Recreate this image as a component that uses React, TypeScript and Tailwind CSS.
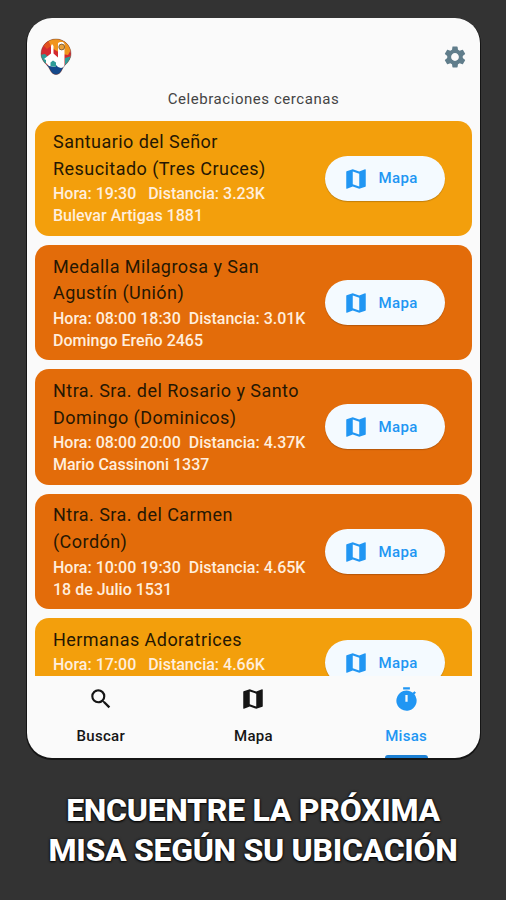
import { MdMap, MdSearch, MdSettings } from 'react-icons/md';

interface Mass {
  name: string[];
  hours: string;
  distance: string;
  address?: string;
  color: string;
}

const masses: Mass[] = [
  { name: ['Santuario del Señor', 'Resucitado (Tres Cruces)'], hours: '19:30 ', distance: '3.23K', address: 'Bulevar Artigas 1881', color: 'bg-[#f39f0c]' },
  { name: ['Medalla Milagrosa y San', 'Agustín (Unión)'], hours: '08:00 18:30', distance: '3.01K', address: 'Domingo Ereño 2465', color: 'bg-[#e36c0a]' },
  { name: ['Ntra. Sra. del Rosario y Santo', 'Domingo (Dominicos)'], hours: '08:00 20:00', distance: '4.37K', address: 'Mario Cassinoni 1337', color: 'bg-[#e36c0a]' },
  { name: ['Ntra. Sra. del Carmen', '(Cordón)'], hours: '10:00 19:30', distance: '4.65K', address: '18 de Julio 1531', color: 'bg-[#e36c0a]' },
  { name: ['Hermanas Adoratrices'], hours: '17:00 ', distance: '4.66K', color: 'bg-[#f39f0c]' },
];

const pin = 'M16 1C7.700 1 1 7.700 1 15.800c0 5 3.300 9 6.500 12 1.700 1.700 2 3.400 3.500 5.700 1.200 1.800 2.900 3 5 3s3.800-1.200 5-3c1.500-2.300 1.800-4 3.500-5.700 3.200-3 6.500-7 6.500-12C31 7.700 24.300 1 16 1z';

function Logo() {
  return (
    <svg viewBox="0 0 32 37" className="h-[37px] w-8">
      <defs>
        <clipPath id="pin">
          <path d={pin} />
        </clipPath>
      </defs>
      <g clipPath="url(#pin)">
        <path fill="#d42a30" d="M0 0h32v37H0z" />
        <path fill="#f0951d" d="M8 0h18l6 10-4 7-6-1-7-4-6-5z" />
        <path fill="#e2501f" d="M3 7l5-5 3 6-4 3z" />
        <path fill="#2e9c98" d="M0 17l5-1 4 4-3 6-6-4zM25 20l7-2v6l-7 5z" />
        <path fill="#14498b" d="M6 27l12-1 9 1v10H6z" />
      </g>
      <path fill="#fff" d="M4 21l7-5.500V8l1-2 1.500 2v7.500l4.500 4V5l2-1h3l1.500 2v23l-3.500 1-3-1-2-2v2l-7-1-3-3v-3z" />
      <circle cx="21.700" cy="9" r="2.900" fill="#e8a13c" stroke="#775b3b" strokeWidth=".9" />
      <path fill="#2e9c98" d="M10.500 24.500l2.500-2 3 2V29l-5.500-1z" />
      <path fill="none" stroke="#5c4638" strokeWidth=".4" d={pin} />
    </svg>
  );
}

function TimerIcon() {
  return (
    <svg viewBox="0 0 24 24" fill="currentColor" className="size-[27px]">
      <path fillRule="evenodd" d="M9 1h6v2H9zM19.030 7.390l1.420-1.420c-.43-.51-.9-.99-1.410-1.410l-1.420 1.420A9 9 0 1 0 19.030 7.390zM13 14h-2V8h2z" />
    </svg>
  );
}

function MassCard({ mass }: { mass: Mass }) {
  return (
    <div className={`flex shrink-0 justify-between rounded-[14px] pl-[18.500px] pr-[26.500px] ${mass.color} ${mass.address ? 'h-[115.400px]' : 'h-[89px]'}`}>
      <div className="whitespace-pre pt-[8.700px]">
        <h2 className="text-[18px] leading-[26.700px] tracking-[0.450px] text-[#251703]">
          {mass.name.map((line) => (
            <div key={line}>{line}</div>
          ))}
        </h2>
        <div className="pt-[0.800px] text-[16px] font-medium leading-[22px] text-[#ffeedd]">
          <p>Hora: {mass.hours}  Distancia: {mass.distance}</p>
          {mass.address && <p>{mass.address}</p>}
        </div>
      </div>
      <button className="flex h-[45px] w-[120px] shrink-0 items-center self-center rounded-full bg-[#f4faff] pl-[18px] pt-px text-[#2196f3] shadow-[0_1px_1px_rgba(0,0,0,0.2)]">
        <MdMap className="size-[26px]" />
        <span className="ml-[9.500px] text-[15px] font-medium tracking-[0.400px]">Mapa</span>
      </button>
    </div>
  );
}

export default function App() {
  return (
    <div className="flex h-[900px] w-[506px] flex-col items-center bg-[#333333] pt-[18px] font-['Roboto',sans-serif]">
      <div className="flex h-[740px] w-[453px] flex-col overflow-hidden rounded-[25px] bg-[#fafafa] shadow-[0_1px_0_1px_#151515]">
        <header className="flex h-[68px] shrink-0 items-start justify-between pl-[13px] pr-3 pt-5">
          <Logo />
          <MdSettings className="mt-[6px] size-[26px] text-[#607d8b]" />
        </header>
        <p className="h-[34.500px] shrink-0 pl-px text-center text-[15px] leading-[27px] tracking-[0.550px] text-[#444]">Celebraciones cercanas</p>
        <main className="flex h-[555.500px] shrink-0 flex-col gap-[9px] overflow-hidden px-2">
          {masses.map((mass) => (
            <MassCard key={mass.name[0]} mass={mass} />
          ))}
        </main>
        <nav className="-mr-[3px] -ml-0.5 grid h-[82px] shrink-0 grid-cols-3 text-[15px] font-medium tracking-[0.300px] text-[#151515]">
          <div className="flex flex-col items-center pt-[10px]">
            <MdSearch className="size-[26px]" />
            <span className="mt-[13px] leading-[22px]">Buscar</span>
          </div>
          <div className="flex flex-col items-center pt-[10px]">
            <MdMap className="size-[26px]" />
            <span className="mt-[13px] leading-[22px]">Mapa</span>
          </div>
          <div className="flex flex-col items-center pt-[10px] text-[#2196f3]">
            <TimerIcon />
            <span className="mt-3 leading-[22px]">Misas</span>
            <span className="mt-auto h-[3px] w-[43px] rounded-t-[3px] bg-[#1c80d4]" />
          </div>
        </nav>
      </div>
      <h1 className="mt-[32px] text-center text-[32px] font-extrabold leading-[40px] tracking-[-0.300px] text-white [text-shadow:0_0_3px_#000,0_1px_2px_#000]">
        <div>ENCUENTRE LA PRÓXIMA</div>
        <div>MISA SEGÚN SU UBICACIÓN</div>
      </h1>
    </div>
  );
}
